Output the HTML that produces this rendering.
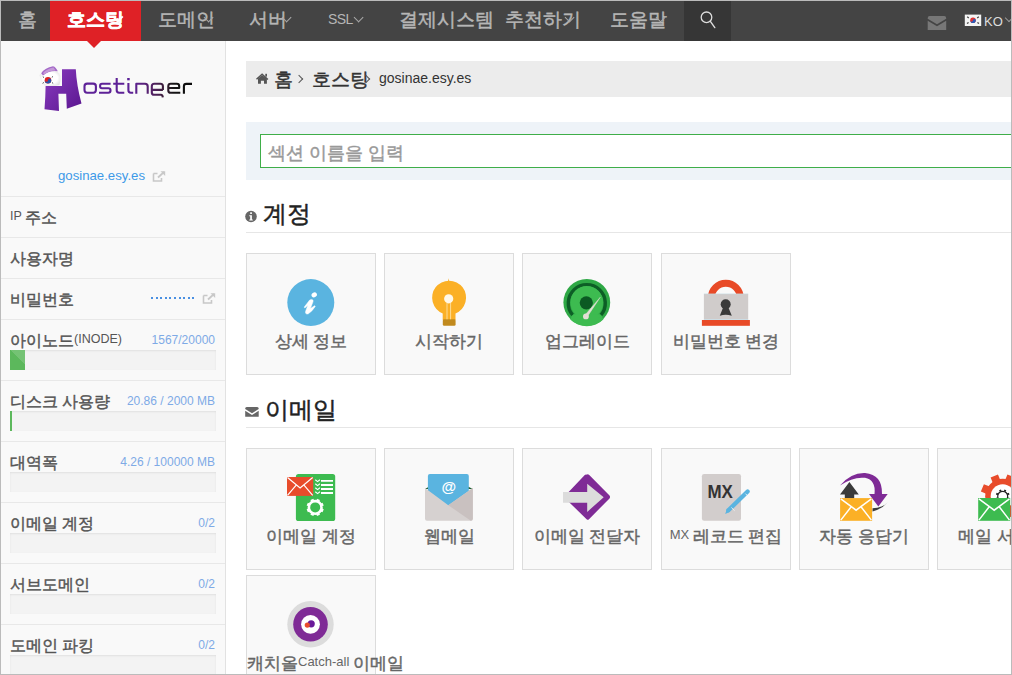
<!DOCTYPE html>
<html><head><meta charset="utf-8">
<style>
*{box-sizing:border-box;margin:0;padding:0}
html,body{width:1012px;height:675px;overflow:hidden;background:#fff}
body{font-family:"Liberation Sans",sans-serif;position:relative}
.a{position:absolute}
#frame{position:absolute;left:0;top:0;width:1012px;height:675px;border:1px solid #bbb;pointer-events:none;z-index:50}
#nav{left:1px;top:1px;width:1010px;height:40px;background:#444;z-index:10}
.ni{position:absolute;top:0;height:40px;line-height:37px;color:#b6b6b6;font-size:14px;white-space:nowrap}
.chev{position:absolute;width:7.2px;height:7.2px;border-right:1.5px solid #a8a8a8;border-bottom:1.5px solid #a8a8a8;transform:rotate(45deg)}
#side{left:1px;top:41px;width:225px;height:634px;background:#f9f9f9;border-right:1px solid #e2e2e2}
.row{position:absolute;left:0;width:224px;border-top:1px solid #e8e8e8}
.lbl{position:absolute;left:9px;font-size:12.5px;color:#555;white-space:nowrap}
.val{position:absolute;right:10px;font-size:12px;color:#7eaae6;white-space:nowrap}
.bar{position:absolute;left:9px;width:206px;height:20px;background:#f3f3f3;box-shadow:inset 0 1px 2px rgba(0,0,0,.08)}
.tile{position:absolute;width:130px;height:122px;background:#f9f9f9;border:1px solid #dcdcdc}
.tile .tl{position:absolute;left:0;width:128px;top:78px;text-align:center;font-size:13px;color:#666;white-space:nowrap}
.tile svg{position:absolute;left:-1px;top:-1px}
.h2{position:absolute;left:246px;font-size:20px;color:#222;white-space:nowrap}
.hline{position:absolute;left:246px;width:766px;height:1px;background:#e6e6e6}
.k{font-size:1.28em;line-height:0;position:relative;top:0.17em;-webkit-text-stroke:0.45px currentColor}
.ni .k,.bc .k{font-size:1.38em;top:0.12em}
</style></head><body>
<div id="frame"></div>

<!-- NAV -->
<div id="nav" class="a">
  <div class="ni" style="left:17px"><span class="k">홈</span></div>
  <div class="a" style="left:49px;top:0;width:91px;height:40px;background:#df2126"></div>
  <div class="ni" style="left:66px;color:#fff;font-weight:bold"><span class="k">호스팅</span></div>
  <div class="ni" style="left:157px"><span class="k">도메인</span></div>
  <div class="ni" style="left:248px"><span class="k">서버</span></div>
  <div class="ni" style="left:327px;letter-spacing:-0.6px">SSL</div>
  <div class="ni" style="left:398px"><span class="k">결제시스템</span></div>
  <div class="ni" style="left:504px"><span class="k">추천하기</span></div>
  <div class="ni" style="left:609px"><span class="k">도움말</span></div>
  <div class="chev" style="left:204.40px;top:12.70px"></div>
  <div class="chev" style="left:281.90px;top:12.70px"></div>
  <div class="chev" style="left:354.10px;top:12.70px"></div>
  <div class="chev" style="left:565.20px;top:12.70px"></div>
  <div class="chev" style="left:656.40px;top:12.70px"></div>
  <div class="chev" style="left:112.50px;top:11.80px;width:7.6px;height:7.6px;border-width:2px;border-color:#fff"></div>
  <div class="a" style="left:683px;top:0;width:47px;height:40px;background:#363636"></div>
  <div class="a" style="left:86px;top:40px;width:0;height:0;border-left:7px solid transparent;border-right:7px solid transparent;border-top:7px solid #df2126"></div>
  <svg class="a" style="left:682px;top:0" width="47" height="40" viewBox="683 1 47 40"><circle cx="706.5" cy="17.3" r="5.3" fill="none" stroke="#ddd" stroke-width="1.3"/><path d="M710.2 21.2L714.8 27.6" stroke="#ddd" stroke-width="1.4" stroke-linecap="round"/></svg>
  <svg class="a" style="left:925px;top:14px" width="22" height="18" viewBox="926 15 22 18"><path d="M927.7 18.2Q927.7 16 929.7 16H944.2Q946.2 16 946.2 18.2V18.8L937 24.3L927.7 18.8Z" fill="#777"/><path d="M927.7 20.8L937 26.3L946.2 20.8V30H927.7Z" fill="#777"/></svg>
  <svg class="a" style="left:963px;top:13px" width="18" height="14" viewBox="964 14 18 14"><rect x="964.8" y="14.6" width="16.4" height="11.4" fill="#f4f4f4"/><circle cx="973" cy="20.3" r="2.8" fill="#d33"/><path d="M970.2 20.3A2.8 2.8 0 0 0 975.8 20.3A1.4 1.4 0 0 0 973 20.3A1.4 1.4 0 0 1 970.2 20.3Z" fill="#2a5bb8"/><path d="M967.2 16.8l1.6 1.2M967 23.6l1.6-1.2M978.8 16.8l-1.6 1.2M979 23.6l-1.6-1.2" stroke="#444" stroke-width="1.3"/></svg>
  <div class="ni" style="left:983px;top:2px;color:#ddd;font-size:13px">KO</div>
  <div class="a" style="left:1005px;top:14px;width:6px;height:6px;border-right:1px solid #999;border-bottom:1px solid #999;transform:rotate(45deg)"></div>
</div>

<!-- SIDEBAR -->
<div id="side" class="a">
    <div class="a" style="left:57px;top:127px;font-size:13.2px;color:#3d9ae8;white-space:nowrap">gosinae.esy.es</div>
  <svg class="a" style="left:151px;top:130px" width="14" height="11" viewBox="0 0 14 11"><path d="M1.5 2.5h4M1.5 2.5v7.5h8V7" fill="none" stroke="#c8c8c8" stroke-width="1.6"/><path d="M6 6.5L12 1" stroke="#c8c8c8" stroke-width="1.8"/><path d="M8.5 0.3h4.7v4.7z" fill="#c8c8c8"/></svg>
  <div class="row" style="top:155px;height:41px"><div class="lbl" style="top:12px">IP <span class="k">주소</span></div></div>
  <div class="row" style="top:196px;height:41px"><div class="lbl" style="top:12px"><span class="k">사용자명</span></div></div>
  <div class="row" style="top:237px;height:41px"><div class="lbl" style="top:12px"><span class="k">비밀번호</span></div>
    <div class="a" style="left:150px;top:18px;width:46px;height:2px;background:repeating-linear-gradient(90deg,#4a90e2 0 2px,transparent 2px 4.6px)"></div>
    <svg class="a" style="left:201px;top:14px" width="14" height="11" viewBox="0 0 14 11"><path d="M1.5 2.5h4M1.5 2.5v7.5h8V7" fill="none" stroke="#c8c8c8" stroke-width="1.6"/><path d="M6 6.5L12 1" stroke="#c8c8c8" stroke-width="1.8"/><path d="M8.5 0.3h4.7v4.7z" fill="#c8c8c8"/></svg>
  </div>
  <div class="row" style="top:278px;height:61px"><div class="lbl" style="top:12px"><span class="k">아이노드</span>(INODE)</div><div class="val" style="top:13px">1567/20000</div><div class="bar" style="top:30px"><div class="a" style="left:0;top:0;width:15px;height:20px;background:#5cb85c;background-image:linear-gradient(45deg,rgba(255,255,255,.15) 25%,transparent 25%,transparent 50%,rgba(255,255,255,.15) 50%,rgba(255,255,255,.15) 75%,transparent 75%,transparent);background-size:40px 40px"></div></div></div>
  <div class="row" style="top:339px;height:61px"><div class="lbl" style="top:12px"><span class="k">디스크 사용량</span></div><div class="val" style="top:13px">20.86 / 2000 MB</div><div class="bar" style="top:30px"><div class="a" style="left:0;top:0;width:2px;height:20px;background:#5cb85c"></div></div></div>
  <div class="row" style="top:400px;height:61px"><div class="lbl" style="top:12px"><span class="k">대역폭</span></div><div class="val" style="top:13px">4.26 / 100000 MB</div><div class="bar" style="top:30px"></div></div>
  <div class="row" style="top:461px;height:61px"><div class="lbl" style="top:12px"><span class="k">이메일 계정</span></div><div class="val" style="top:13px">0/2</div><div class="bar" style="top:30px"></div></div>
  <div class="row" style="top:522px;height:61px"><div class="lbl" style="top:12px"><span class="k">서브도메인</span></div><div class="val" style="top:13px">0/2</div><div class="bar" style="top:30px"></div></div>
  <div class="row" style="top:583px;height:61px"><div class="lbl" style="top:12px"><span class="k">도메인 파킹</span></div><div class="val" style="top:13px">0/2</div><div class="bar" style="top:30px"></div></div>
</div>


<svg class="a" style="left:0;top:0;z-index:5" width="226" height="130" viewBox="0 0 226 130">
<defs>
<linearGradient id="hg" x1="0" y1="0" x2="1" y2="1"><stop offset="0" stop-color="#8a3cc0"/><stop offset="1" stop-color="#5a168f"/></linearGradient>
<linearGradient id="tg" gradientUnits="userSpaceOnUse" x1="83" y1="0" x2="192" y2="0"><stop offset="0" stop-color="#5e2298"/><stop offset="0.45" stop-color="#5e2296"/><stop offset="0.62" stop-color="#55216a"/><stop offset="0.75" stop-color="#3a1e36"/><stop offset="0.83" stop-color="#161616"/><stop offset="1" stop-color="#0a0a0a"/></linearGradient>
<radialGradient id="cg" cx="0.5" cy="0.5" r="0.6"><stop offset="0.6" stop-color="#fff"/><stop offset="1" stop-color="#ddd"/></radialGradient>
</defs>
<path d="M62 69.3L75.8 69.3Q76.5 85 81.5 103.5L66.8 108.8L66.2 93.8L58.4 93.8L59 111L44.5 109.2Q45.5 96 45.6 86L62 86Z" fill="url(#hg)"/>
<path d="M39.5 75Q44 70.5 52 70.3Q58.5 70.5 60.3 76Q61 81 59.3 85Q52 86.5 44.5 85.5Q40.5 81 39.5 75Z" fill="url(#cg)"/>
<path d="M41.2 73.2Q45 67.5 53 66.2Q56 67 57.8 71.3Q50 70 43 75.5Z" fill="#a46ac8"/>
<path d="M43 73Q47 68.5 53.5 67.5L55.5 70.5Q49 70.5 44 74.5Z" fill="#c49ad8"/>
<circle cx="48" cy="80.2" r="3.3" fill="#d22"/>
<path d="M44.7 80.2A3.3 3.3 0 0 0 51.3 80.2A1.65 1.65 0 0 0 48 80.2A1.65 1.65 0 0 1 44.7 80.2Z" fill="#2553a8"/>
<path d="M42.8 76.6l1.2 1M42.6 83.4l1.3-1M53 76.4l-1.2 1M53.2 83.5l-1.2-1" stroke="#555" stroke-width="1"/>
<g fill="none" stroke="url(#tg)" stroke-width="2.1" stroke-linejoin="round">
<rect x="84.5" y="83.6" width="11.4" height="9.1" rx="2.6"/>
<path d="M110.6 83.8H102Q100.1 83.8 100.1 86V86.3Q100.1 88.3 102 88.3H108.3Q110.5 88.3 110.5 90.5Q110.5 92.7 108.3 92.7H99"/>
<path d="M113.2 83.8H124.3M116.7 78V90.3Q116.7 92.7 119.1 92.7H124.3"/>
<path d="M128.4 83V90.3Q128.4 92.7 130.8 92.7H133.2"/>
<path d="M136.3 93.8V83.8H145Q147.7 83.8 147.7 86.5V93.8"/>
<path d="M162.9 89.9H151.8M151.8 89.9V86.3Q151.8 83.8 154.3 83.8H160.4Q162.9 83.8 162.9 86.3V89.9M151.8 89.9V92.4Q151.8 94.7 154.1 94.7H161Q162.6 94.7 162.8 97.4"/>
<path d="M180.3 92.8H170.7Q168.3 92.8 168.3 90.4V86.2Q168.3 83.8 170.7 83.8H176.8Q179.2 83.8 179.2 86.2V88H168.3"/>
<path d="M183.9 93.8V86.3Q183.9 83.9 186.3 83.9H192"/>
</g>
<rect x="127.2" y="78" width="2.5" height="2.3" fill="#5a2096"/>
</svg>
<!-- CONTENT -->
<div class="a" style="left:246px;top:61px;width:766px;height:36px;background:#ececec"></div>
<div class="a" style="left:246px;top:122px;width:766px;height:58px;background:#eef3f8"></div>
<div class="a" style="left:260px;top:134px;width:760px;height:34px;background:#fff;border:1px solid #3fae49"></div>


<svg class="a" style="left:255px;top:72px" width="15" height="13" viewBox="255 72 15 13"><path d="M256.5 79.3L262.1 74.3L267.9 79.5" fill="none" stroke="#555" stroke-width="1.5"/><path d="M258 78.6L262.1 75.2L266.9 78.6V83.8H264V80.7H260.9V83.8H258Z" fill="#555"/><rect x="265.3" y="73.8" width="1.7" height="2.8" fill="#555"/></svg>
<div class="a bc" style="left:274px;top:71px;font-size:14px;color:#333;white-space:nowrap"><span class="k">홈</span></div>
<div class="a" style="left:296px;top:76px;width:6px;height:6px;border-right:1.2px solid #555;border-top:1.2px solid #555;transform:rotate(45deg)"></div>
<div class="a bc" style="left:312px;top:71px;font-size:14px;color:#333;white-space:nowrap"><span class="k">호스팅</span></div>
<div class="a" style="left:363px;top:76px;width:6px;height:6px;border-right:1.2px solid #555;border-top:1.2px solid #555;transform:rotate(45deg)"></div>
<div class="a" style="left:379px;top:70px;font-size:14px;color:#333;white-space:nowrap">gosinae.esy.es</div>
<div class="a" style="left:268px;top:143px;font-size:14px;color:#999;white-space:nowrap"><span class="k">섹션 이름을 입력</span></div>
<svg class="a" style="left:244px;top:209px" width="16" height="16" viewBox="244 209 16 16"><circle cx="251" cy="216.5" r="5.8" fill="#666"/><rect x="250.2" y="212.3" width="1.7" height="1.7" fill="#fff"/><path d="M249.3 215.2H251.9V219.4H252.8V220.5H249.3V219.4H250.2V216.3H249.3Z" fill="#fff"/></svg>
<svg class="a" style="left:244px;top:405px" width="16" height="14" viewBox="244 405 16 14"><path d="M245.2 408.5Q245.2 407 246.7 407H257.2Q258.7 407 258.7 408.5V409L252 413.3L245.2 409Z" fill="#666"/><path d="M245.2 410.8L252 415L258.7 410.8V416.7H245.2Z" fill="#666"/></svg>
<div class="h2" style="top:201px;left:263px;font-size:19px"><span class="k">계정</span></div>
<div class="hline" style="top:232px"></div>
<div class="h2" style="top:397px;left:265px;font-size:19px"><span class="k">이메일</span></div>
<div class="hline" style="top:427px"></div>

<div class="tile" style="left:246px;top:253px"><svg width="130" height="122" viewBox="0 0 130 122"><circle cx="64.8" cy="49.6" r="23.5" fill="#5ab4e0"/><ellipse cx="68.2" cy="41.9" rx="2.8" ry="2.4" transform="rotate(-35 68.2 41.9)" fill="#fff"/><path d="M63.7 47Q65.5 45.8 66.9 47Q67.4 48 66.8 49.3L64.4 55.6L68.6 52.7Q69.4 52.9 69.1 53.7Q66 58.5 62.3 60.8Q60.6 61.5 59.7 60.3Q59.3 59 59.8 57.8L61.8 52.3L58.9 54.9Q58.2 54.8 58.3 54Z" fill="#fff" stroke="#fff" stroke-width="0.5" stroke-linejoin="round"/></svg><div class="tl"><span class="k">상세 정보</span></div></div>
<div class="tile" style="left:384px;top:253px"><svg width="130" height="122" viewBox="0 0 130 122"><path d="M64.6 25.3L65.4 29.5H63.8Z" fill="#fbb026"/><path d="M58.7 67V60.4A17 17 0 1 1 71.5 60.4V67Z" fill="#fbb026"/><rect x="58.8" y="66.3" width="12.8" height="6.5" rx="1.4" fill="#c18a1e"/><path d="M63 50V66.3M66.6 50V66.3" stroke="#fde7b4" stroke-width="0.8"/><circle cx="64.7" cy="45.8" r="4.6" fill="#fff8e8"/></svg><div class="tl"><span class="k">시작하기</span></div></div>
<div class="tile" style="left:522px;top:253px"><svg width="130" height="122" viewBox="0 0 130 122"><circle cx="64.8" cy="49.4" r="23.4" fill="#2ea845"/><path d="M48.3 66.4A23.4 23.4 0 0 0 81.3 66.4L79 61.5H50.6Z" fill="#3dbb50"/><path d="M50.6 62A18.5 18.5 0 1 1 79 62" fill="none" stroke="#0d5e26" stroke-width="3.4"/><circle cx="64.8" cy="49.4" r="16.3" fill="#3dbb50"/><path d="M50.9 61.4H78.7L76 66H53.6Z" fill="#3dbb50"/><circle cx="64.3" cy="49.8" r="6.6" fill="#0b5a23"/><path d="M62.6 62.5L78.3 44.2L65.2 64Z" fill="#e3ded6" stroke="#e3ded6" stroke-width="0.4" stroke-linejoin="round"/><circle cx="63.9" cy="63.4" r="2.9" fill="#e3ded6"/></svg><div class="tl"><span class="k">업그레이드</span></div></div>
<div class="tile" style="left:661px;top:253px"><svg width="130" height="122" viewBox="0 0 130 122"><circle cx="64.8" cy="44.7" r="14.45" fill="none" stroke="#e84a27" stroke-width="6.9"/><rect x="42.9" y="41" width="44.3" height="25.2" fill="#d0cccb"/><rect x="42.9" y="40.6" width="44.3" height="0.6" fill="#c8dbe4"/><rect x="40.9" y="67" width="48" height="5.8" fill="#e84a27"/><rect x="42.9" y="66.1" width="44.3" height="0.9" fill="#c8dbe4"/><circle cx="64.7" cy="51.3" r="5" fill="#3a3a3a"/><path d="M62.3 54L58.8 62.8Q64.7 60.5 70.8 62.8L67.2 54Z" fill="#3a3a3a"/></svg><div class="tl"><span class="k">비밀번호 변경</span></div></div>

<div class="tile" style="left:246px;top:448px"><svg width="130" height="122" viewBox="0 0 130 122"><rect x="49.9" y="25.9" width="39.3" height="47.1" rx="2.6" fill="#3dbb50"/><rect x="41" y="29" width="26.2" height="18.9" fill="#e84c2b"/><path d="M41.5 29.5L54.1 40L66.7 29.5M41.5 47.4L50.2 37.2M66.7 47.4L58 37.2" fill="none" stroke="#fff" stroke-width="1.2"/><path d="M69.3 31.8L71.6 33.6L73.9 31.8M69.3 35.8L71.6 37.6L73.9 35.8M69.3 39.8L71.6 41.6L73.9 39.8M69.3 43.8L71.6 45.6L73.9 43.8" fill="none" stroke="#fff" stroke-width="1.2"/><path d="M75 32.9H87M75 37H87M75 41H87M75 45H87" stroke="#fff" stroke-width="1.9"/><g transform="translate(69.2 59.4)"><circle r="6.3" fill="none" stroke="#fff" stroke-width="2.6"/><path d="M-1.6 -8.6H1.6V-6H-1.6ZM-1.6 6H1.6V8.6H-1.6ZM-8.6 -1.6V1.6H-6V-1.6ZM6 -1.6V1.6H8.6V-1.6Z" fill="#fff" transform="rotate(22.5)"/><path d="M-1.6 -8.6H1.6V-6H-1.6ZM-1.6 6H1.6V8.6H-1.6ZM-8.6 -1.6V1.6H-6V-1.6ZM6 -1.6V1.6H8.6V-1.6Z" fill="#fff" transform="rotate(67.5)"/></g></svg><div class="tl"><span class="k">이메일 계정</span></div></div>
<div class="tile" style="left:384px;top:448px"><svg width="130" height="122" viewBox="0 0 130 122"><path d="M41 41L47 37.5V40H82V37.5L88.8 41Z" fill="#1d5e2e"/><path d="M43.9 28Q43.9 26 45.9 26H82.8Q84.8 26 84.8 28V58H43.9Z" fill="#5ab4e0"/><text x="64.8" y="44" font-family="Liberation Sans" font-weight="bold" font-size="15" fill="#fff" text-anchor="middle">@</text><path d="M41 40L64.3 57.2L88.8 40V70.8Q88.8 72.8 86.8 72.8H43Q41 72.8 41 70.8Z" fill="#d6d1d0"/><path d="M88.8 40V70.8Q88.8 72.8 86.8 72.8L64.3 57.2Z" fill="#c9c1c0"/></svg><div class="tl"><span class="k">웹메일</span></div></div>
<div class="tile" style="left:522px;top:448px"><svg width="130" height="122" viewBox="0 0 130 122"><path d="M65 26.5Q66 26 67 26.8L87.5 47.6Q88.6 49 87.5 50.4L67 71.2Q65.8 72.2 64.6 71.2L43.3 50.5Q42 49 43.3 47.5L63 26.8Z" fill="#7f2b96"/><path d="M41 44H65.2V35.7L81.7 49.2L65.2 63.9V54.7H41Z" fill="#dcdcdc"/></svg><div class="tl"><span class="k">이메일 전달자</span></div></div>
<div class="tile" style="left:661px;top:448px"><svg width="130" height="122" viewBox="0 0 130 122"><rect x="40.9" y="26" width="39.1" height="46.8" rx="2.2" fill="#d2cdcc"/><text x="46.5" y="50" font-family="Liberation Sans" font-weight="bold" font-size="17.5" fill="#333" textLength="25.4" lengthAdjust="spacingAndGlyphs">MX</text><path d="M67.4 62.3L86.6 43.5" stroke="#5ab4e0" stroke-width="4.3" stroke-linecap="round"/><path d="M64.2 65.9L66 60.6L69.2 63.8Z" fill="#5ab4e0"/><path d="M70.4 59.5L73.6 62.7M84.4 45.6L87.3 48.5" stroke="#f9f9f9" stroke-width="0.8"/></svg><div class="tl">MX <span class="k">레코드 편집</span></div></div>
<div class="tile" style="left:799px;top:448px"><svg width="130" height="122" viewBox="0 0 130 122"><path d="M41 37.5Q52 24.5 66 25Q83.5 26.5 83 46L75.5 46Q77 32 66 29.8Q54 28.5 41 37.5Z" fill="#7f2b96"/><path d="M70 46H88.7L79.3 58.6Z" fill="#7f2b96"/><path d="M73.5 63.5Q83 61 88.5 54.5Q84 59.5 73.5 60.3Z" fill="#3a3a3a"/><path d="M41 46.6L50.4 34.1L59.8 46.6H55.2V50.5H45.8V46.6Z" fill="#3a3a3a"/><rect x="41.1" y="50.1" width="32" height="22.7" fill="#fbb026"/><path d="M41.8 50.8L57.1 62.2L72.4 50.8M41.8 72.1L52 59M72.4 72.1L62.2 59" fill="none" stroke="#fff" stroke-width="1.5"/></svg><div class="tl"><span class="k">자동 응답기</span></div></div>
<div class="tile" style="left:937px;top:448px"><svg width="130" height="122" viewBox="0 0 130 122"><g transform="translate(65.7 48.3)"><circle r="17.5" fill="#e84c2b"/><path d="M-4 -22H4V-15H-4ZM-4 15H4V22H-4ZM-22 -4V4H-15V-4ZM15 -4V4H22V-4Z" fill="#e84c2b" transform="rotate(22.5)"/><path d="M-4 -22H4V-15H-4ZM-4 15H4V22H-4ZM-22 -4V4H-15V-4ZM15 -4V4H22V-4Z" fill="#e84c2b" transform="rotate(67.5)"/><circle r="12" fill="#fff"/><circle r="5" fill="none" stroke="#222" stroke-width="1.2"/><path d="M-1 -7H1V-5H-1ZM-1 5H1V7H-1ZM-7 -1V1H-5V-1ZM5 -1V1H7V-1Z" fill="#222" transform="rotate(22.5)"/><path d="M-1 -7H1V-5H-1ZM-1 5H1V7H-1ZM-7 -1V1H-5V-1ZM5 -1V1H7V-1Z" fill="#222" transform="rotate(67.5)"/></g><rect x="41.2" y="50" width="32" height="22.8" fill="#3dbb50"/><path d="M41.9 50.8L57.2 62.2L72.5 50.8M41.9 72.1L52 59M72.5 72.1L62.4 59" fill="none" stroke="#fff" stroke-width="1.5"/></svg><div class="tl" style="text-align:left;left:20px;width:auto"><span class="k">메일 서비스 제어</span></div></div>
<div class="tile" style="left:246px;top:575px"><svg width="130" height="122" viewBox="0 0 130 122"><circle cx="64.5" cy="49.3" r="23.2" fill="#dcdcdc"/><circle cx="64.5" cy="49.3" r="17.3" fill="#7f2b96"/><circle cx="64.5" cy="49.3" r="9.4" fill="#fff"/><circle cx="65.2" cy="48.8" r="3.6" fill="#6a1a9a"/><circle cx="61.3" cy="50.1" r="2.6" fill="#e84c2b"/></svg><div class="tl"><span class="k">캐치올</span>Catch-all <span class="k">이메일</span></div></div>

</body></html>
